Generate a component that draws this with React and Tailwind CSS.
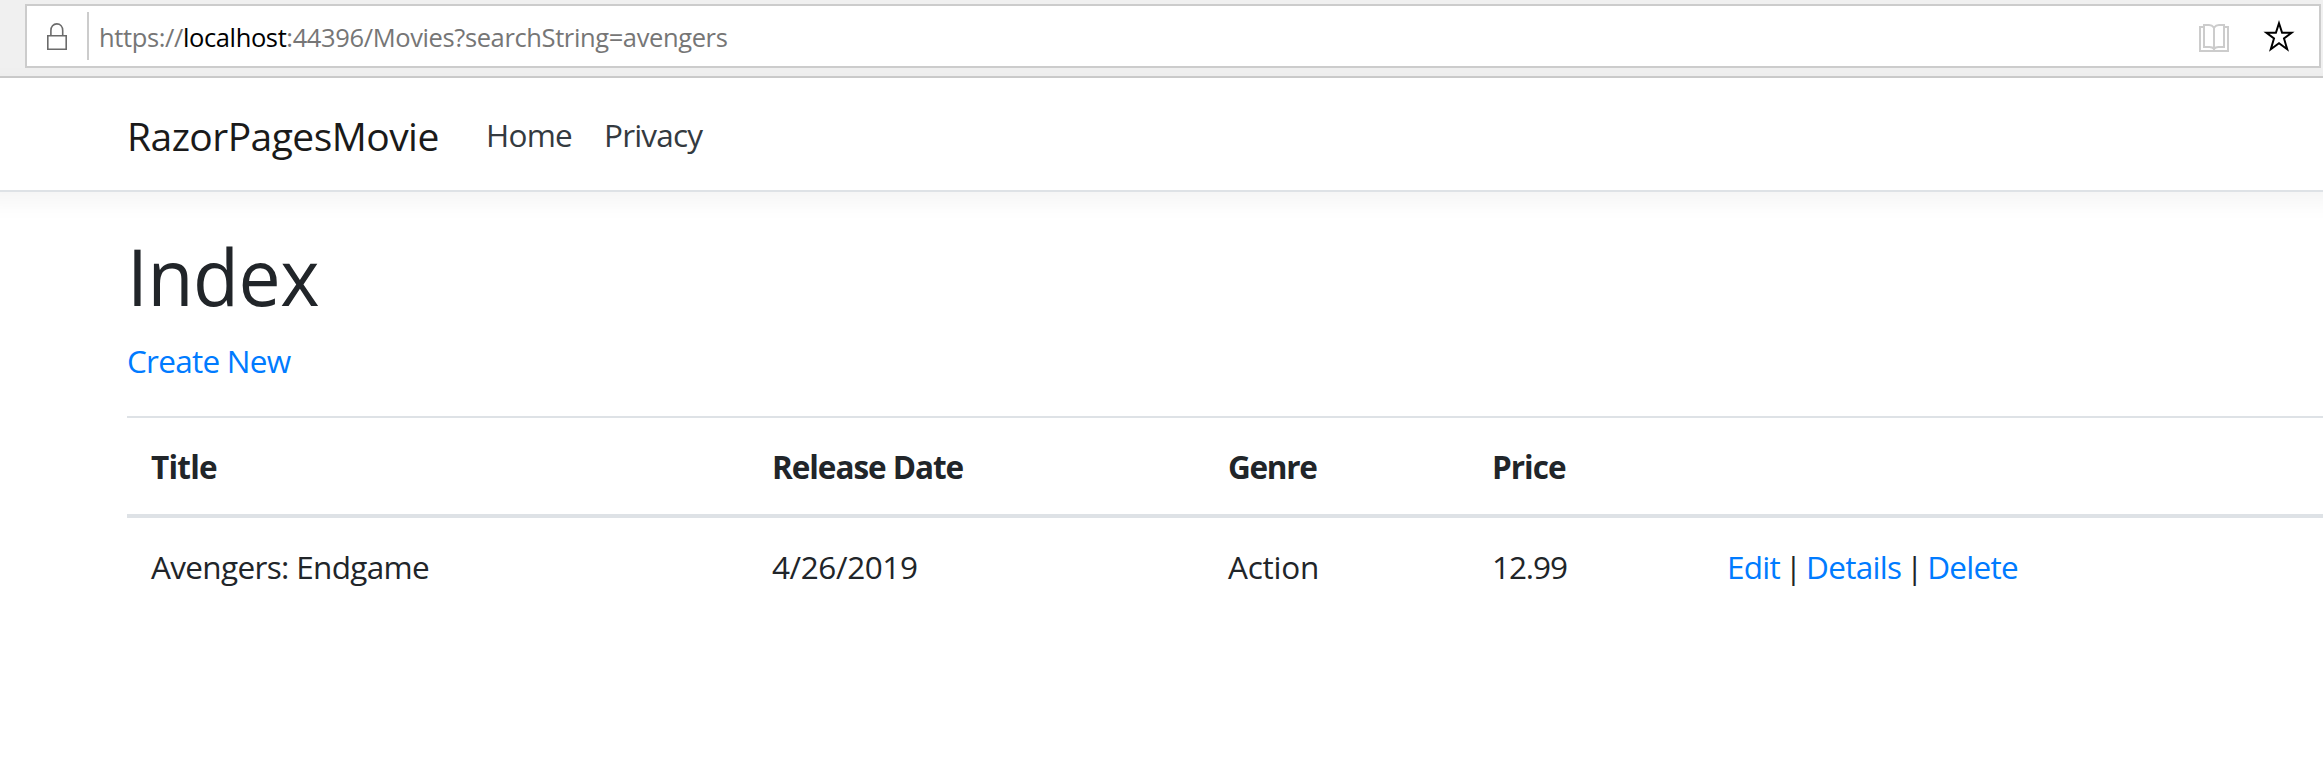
import React from "react";

function LockIcon() {
  return (
    <svg className="ml-5 h-8 w-5 shrink-0" viewBox="0 0 20 32" fill="none" stroke="#6b6b6b" strokeWidth="1.6">
      <path d="M0.8 15.8H19.2V29.2H0.8Z" />
      <path d="M3.9 15.5V10.5C3.9 6.6 6.3 3.9 9.8 3.9S15.7 6.6 15.7 10.5V15.5" />
    </svg>
  );
}

function BookIcon() {
  return (
    <svg className="h-8 w-[30px]" viewBox="0 0 30 32" fill="none" stroke="#cccccc" strokeWidth="2">
      <path d="M5 5H1V29H29V5H25" />
      <path d="M15 5.6C13.5 3.6 12 3 10 3H5V25H10.5C12.5 25 14 25.6 15 27C16 25.6 17.5 25 19.5 25H25V3H20C18 3 16.5 3.6 15 5.6V28" />
    </svg>
  );
}

function StarIcon() {
  return (
    <svg className="h-9 w-8" viewBox="0 0 32 36" fill="none" stroke="#000000" strokeWidth="2" strokeMiterlimit="10">
      <path d="M16 5.2L19.1 14.7H28.6L21 20.5L24.2 31.2L16 25.2L7.8 31.2L11 20.5L3.4 14.7H12.900Z" />
    </svg>
  );
}

function AddressBar() {
  return (
    <div className="h-[78px] border-b-2 border-[#cccccc] bg-[#f0f0f0] pt-1 pr-[2px] pl-[25px]">
      <div className="flex h-16 items-center border-2 border-[#cccccc] bg-white">
        <LockIcon />
        <div className="ml-5 h-12 w-[2px] bg-[#cccccc]" />
        <div className="ml-[10px] flex-1 pt-px text-[25.5px] leading-[64px] tracking-[-0.38px] whitespace-nowrap text-[#767676]">
          https://<span className="text-black">localhost</span>:44396/Movies?searchString=avengers
        </div>
        <div className="mr-[34px] pt-1"><BookIcon /></div>
        <div className="mr-6"><StarIcon /></div>
      </div>
    </div>
  );
}

function Navbar() {
  return (
    <nav className="-mx-6 flex h-[114px] items-center border-b-2 border-[#dee2e6] bg-white pl-[151px] whitespace-nowrap shadow-[0_8px_24px_rgba(0,0,0,0.05)]">
      <a className="w-[359px] pt-1 text-[39px] leading-[60px] tracking-[-0.55px] text-[#1a1a1a]">RazorPagesMovie</a>
      <a className="w-[118px] pt-px text-[31.5px] leading-[48px] tracking-[-0.75px] text-[#343a40]">Home</a>
      <a className="pt-px text-[31.5px] leading-[48px] tracking-[-0.8px] text-[#343a40]">Privacy</a>
    </nav>
  );
}

function MoviesTable() {
  return (
    <table className="mt-8 w-[2220px] table-fixed border-separate border-spacing-0 text-left text-[31.5px] leading-[48px] whitespace-nowrap">
      <colgroup>
        <col className="w-[621px]" />
        <col className="w-[456px]" />
        <col className="w-[264px]" />
        <col className="w-[235px]" />
        <col />
      </colgroup>
      <thead>
        <tr className="font-bold">
          <th className="border-t-2 border-b-4 border-[#dee2e6] px-6 pt-[25px] pb-[23px] tracking-[-0.78px]">Title</th>
          <th className="border-t-2 border-b-4 border-[#dee2e6] px-6 pt-[25px] pb-[23px] tracking-[-1.05px]">Release Date</th>
          <th className="border-t-2 border-b-4 border-[#dee2e6] px-6 pt-[25px] pb-[23px] tracking-[-1.3px]">Genre</th>
          <th className="border-t-2 border-b-4 border-[#dee2e6] px-6 pt-[25px] pb-[23px] tracking-[-1px]">Price</th>
          <th className="border-t-2 border-b-4 border-[#dee2e6]" />
        </tr>
      </thead>
      <tbody>
        <tr>
          <td className="px-6 pt-[25px] pb-[23px] tracking-[-0.66px]">Avengers: Endgame</td>
          <td className="px-6 pt-[25px] pb-[23px] tracking-[-0.4px]">4/26/2019</td>
          <td className="px-6 pt-[25px] pb-[23px] tracking-[-0.25px]">Action</td>
          <td className="px-6 pt-[25px] pb-[23px] tracking-[-1.1px]">12.99</td>
          <td className="px-6 pt-[25px] pb-[23px] tracking-[-0.72px]">
            <div className="flex">
              <a className="text-[#007bff]">Edit</a>
              <span className="w-[26px] text-center">|</span>
              <a className="text-[#007bff]">Details</a>
              <span className="w-[26px] text-center">|</span>
              <a className="text-[#007bff]">Delete</a>
            </div>
          </td>
        </tr>
      </tbody>
    </table>
  );
}

export default function App() {
  return (
    <div className="h-[777px] w-full overflow-hidden bg-white font-['Open_Sans','Noto_Sans',sans-serif] text-[#212529]">
      <AddressBar />
      <Navbar />
      <main className="pt-9 pl-[127px]">
        <h1 className="h-[92px] origin-left scale-x-95 text-[79px] leading-[96px] tracking-[-0.5px]">Index</h1>
        <p className="mt-4 h-12 pt-px text-[31.5px] leading-[48px] tracking-[-0.75px]">
          <a className="text-[#007bff]">Create New</a>
        </p>
        <MoviesTable />
      </main>
    </div>
  );
}
